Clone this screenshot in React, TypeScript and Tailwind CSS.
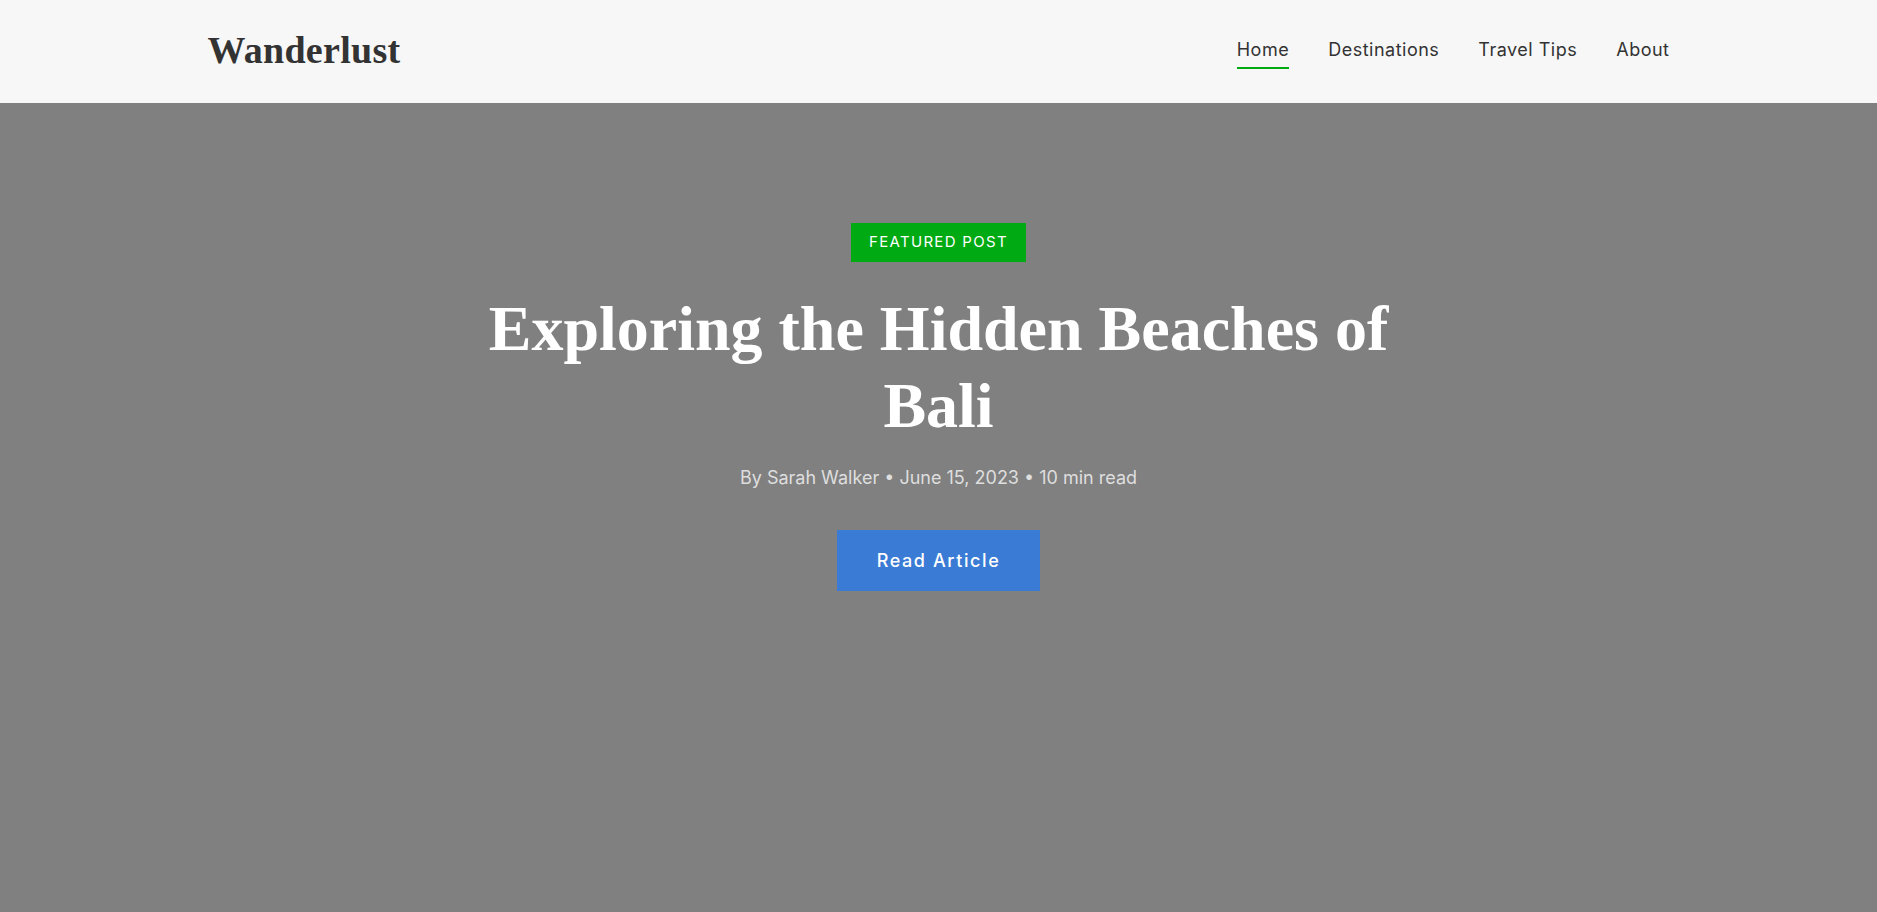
const navLinks = ["Home", "Destinations", "Travel Tips", "About"];

const serif = "font-['Liberation_Serif',serif]";
const sans = "font-['Inter',sans-serif]";

function Header() {
  return (
    <header className="bg-[#f7f7f7] h-[103px]">
      <div className="mx-auto w-[1462px] h-full flex items-center justify-between">
        <h1 className={`${serif} font-bold text-[38px] text-[#333] tracking-[0.3px] -mt-[3px]`}>
          Wanderlust
        </h1>
        <nav className="flex items-center gap-[39px] -mt-[4px]">
          {navLinks.map((link, i) => (
            <a
              key={link}
              href="#"
              className={`${sans} relative text-[18px] tracking-[0.5px] text-[#333] ${
                i === 0 ? "after:absolute after:left-0 after:right-0 after:-bottom-[6px] after:h-[2px] after:bg-[#00aa13]" : ""
              }`}
            >
              {link}
            </a>
          ))}
        </nav>
      </div>
    </header>
  );
}

function Hero() {
  return (
    <section className="bg-[#808080] min-h-[809px] pt-[120px] flex flex-col items-center text-center">
      <span
        className={`${sans} bg-[#00aa13] text-white uppercase text-[15px] tracking-[1.3px] h-[39px] px-[18px] flex items-center`}
      >
        Featured Post
      </span>
      <h2
        className={`${serif} font-bold text-white text-[64px] leading-[1.2] max-w-[960px] mt-[29px]`}
      >
        Exploring the Hidden Beaches of Bali
      </h2>
      <p className={`${sans} text-[18px] text-[#dedede] mt-[19px]`}>
        By Sarah Walker • June 15, 2023 • 10 min read
      </p>
      <button
        className={`${sans} mt-[39px] bg-[#3a7bd5] text-white text-[18px] font-medium tracking-[1.6px] h-[61px] px-[40px]`}
      >
        Read Article
      </button>
    </section>
  );
}

export default function App() {
  return (
    <div className="min-h-screen bg-[#808080]">
      <Header />
      <Hero />
    </div>
  );
}
